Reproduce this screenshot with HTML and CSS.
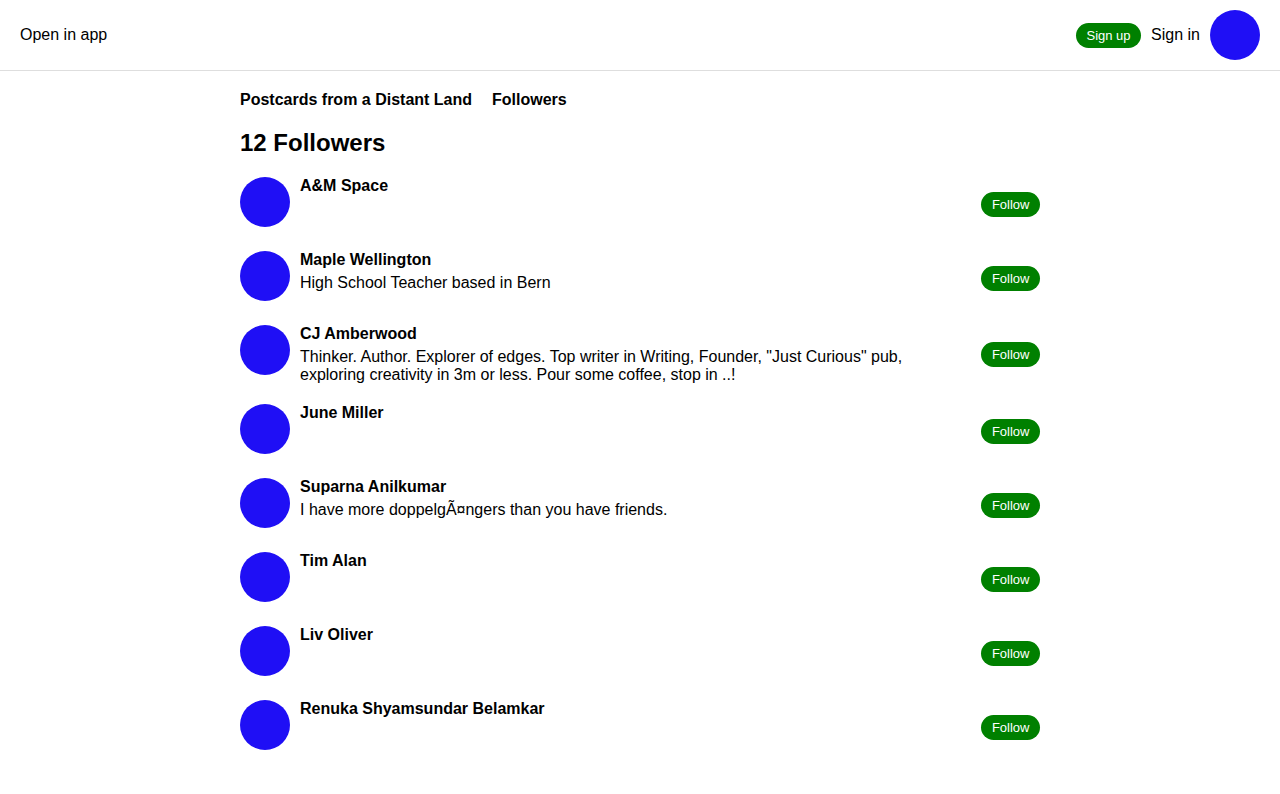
FILE: index.html
```html
<!DOCTYPE html>
<html>
<head>
<meta charset="utf-8">
<title>Followers</title>
<link rel="stylesheet" href="styles.css">
</head>
<body>
<header class="topbar">
  <a class="open-app">Open in app</a>
  <div class="auth">
    <a class="pill">Sign up</a>
    <a class="signin">Sign in</a>
    <span class="avatar big"></span>
  </div>
</header>
<main class="content">
  <nav class="crumbs">
    <span>Postcards from a Distant Land</span>
    <span>Followers</span>
  </nav>
  <h1 class="title">12 Followers</h1>
  <ul class="list">
    <li class="row">
      <div class="pic"><span class="avatar"></span></div>
      <div class="info"><div class="name">A&amp;M Space</div></div>
      <a class="pill">Follow</a>
    </li>
    <li class="row">
      <div class="pic"><span class="avatar"></span></div>
      <div class="info"><div class="name">Maple Wellington</div><div class="bio">High School Teacher based in Bern</div></div>
      <a class="pill">Follow</a>
    </li>
    <li class="row">
      <div class="pic"><span class="avatar"></span></div>
      <div class="info"><div class="name">CJ Amberwood</div><div class="bio">Thinker. Author. Explorer of edges. Top writer in Writing, Founder, "Just Curious" pub, exploring creativity in 3m or less. Pour some coffee, stop in ..!</div></div>
      <a class="pill">Follow</a>
    </li>
    <li class="row">
      <div class="pic"><span class="avatar"></span></div>
      <div class="info"><div class="name">June Miller</div></div>
      <a class="pill">Follow</a>
    </li>
    <li class="row">
      <div class="pic"><span class="avatar"></span></div>
      <div class="info"><div class="name">Suparna Anilkumar</div><div class="bio">I have more doppelgÃ¤ngers than you have friends.</div></div>
      <a class="pill">Follow</a>
    </li>
    <li class="row">
      <div class="pic"><span class="avatar"></span></div>
      <div class="info"><div class="name">Tim Alan</div></div>
      <a class="pill">Follow</a>
    </li>
    <li class="row">
      <div class="pic"><span class="avatar"></span></div>
      <div class="info"><div class="name">Liv Oliver</div></div>
      <a class="pill">Follow</a>
    </li>
    <li class="row">
      <div class="pic"><span class="avatar"></span></div>
      <div class="info"><div class="name">Renuka Shyamsundar Belamkar</div></div>
      <a class="pill">Follow</a>
    </li>
  </ul>
</main>
</body>
</html>
```
FILE: styles.css
```css
* { box-sizing: border-box; }
html, body { margin: 0; padding: 0; background: #fff; }
body {
  font-family: "Liberation Sans", Arial, Helvetica, sans-serif;
  font-size: 16px;
  color: #000;
}
.topbar {
  height: 71px;
  display: flex;
  align-items: center;
  justify-content: space-between;
  padding: 0 20px;
  border-bottom: 1px solid #dedede;
}
.open-app { font-size: 16px; }
.auth { display: flex; align-items: center; gap: 10px; }
.pill {
  display: inline-flex;
  align-items: center;
  height: 25px;
  padding: 0 10.5px;
  border-radius: 13px;
  background: #008000;
  color: #fff;
  font-size: 13px;
  white-space: nowrap;
}
.signin { font-size: 16px; }
.avatar {
  display: block;
  width: 50px;
  height: 50px;
  border-radius: 50%;
  background: #1f0ff5;
}
.content {
  width: 800px;
  margin: 0 auto;
  padding-top: 20px;
}
.crumbs {
  display: flex;
  gap: 20px;
  font-weight: bold;
  font-size: 16px;
  line-height: 18px;
}
.title {
  margin: 20px 0 20px;
  font-size: 24px;
  line-height: 28px;
  font-weight: bold;
}
.list { list-style: none; margin: 0; padding: 0; }
.row {
  display: flex;
  align-items: center;
  gap: 10px;
  margin-bottom: 20px;
}
.pic { align-self: flex-start; height: 54px; flex: none; }
.info { flex: 1; align-self: flex-start; padding-right: 10px; }
.name { font-weight: bold; line-height: 18px; margin-bottom: 5px; }
.bio { line-height: 18px; }
.row .pill { flex: none; }
```
